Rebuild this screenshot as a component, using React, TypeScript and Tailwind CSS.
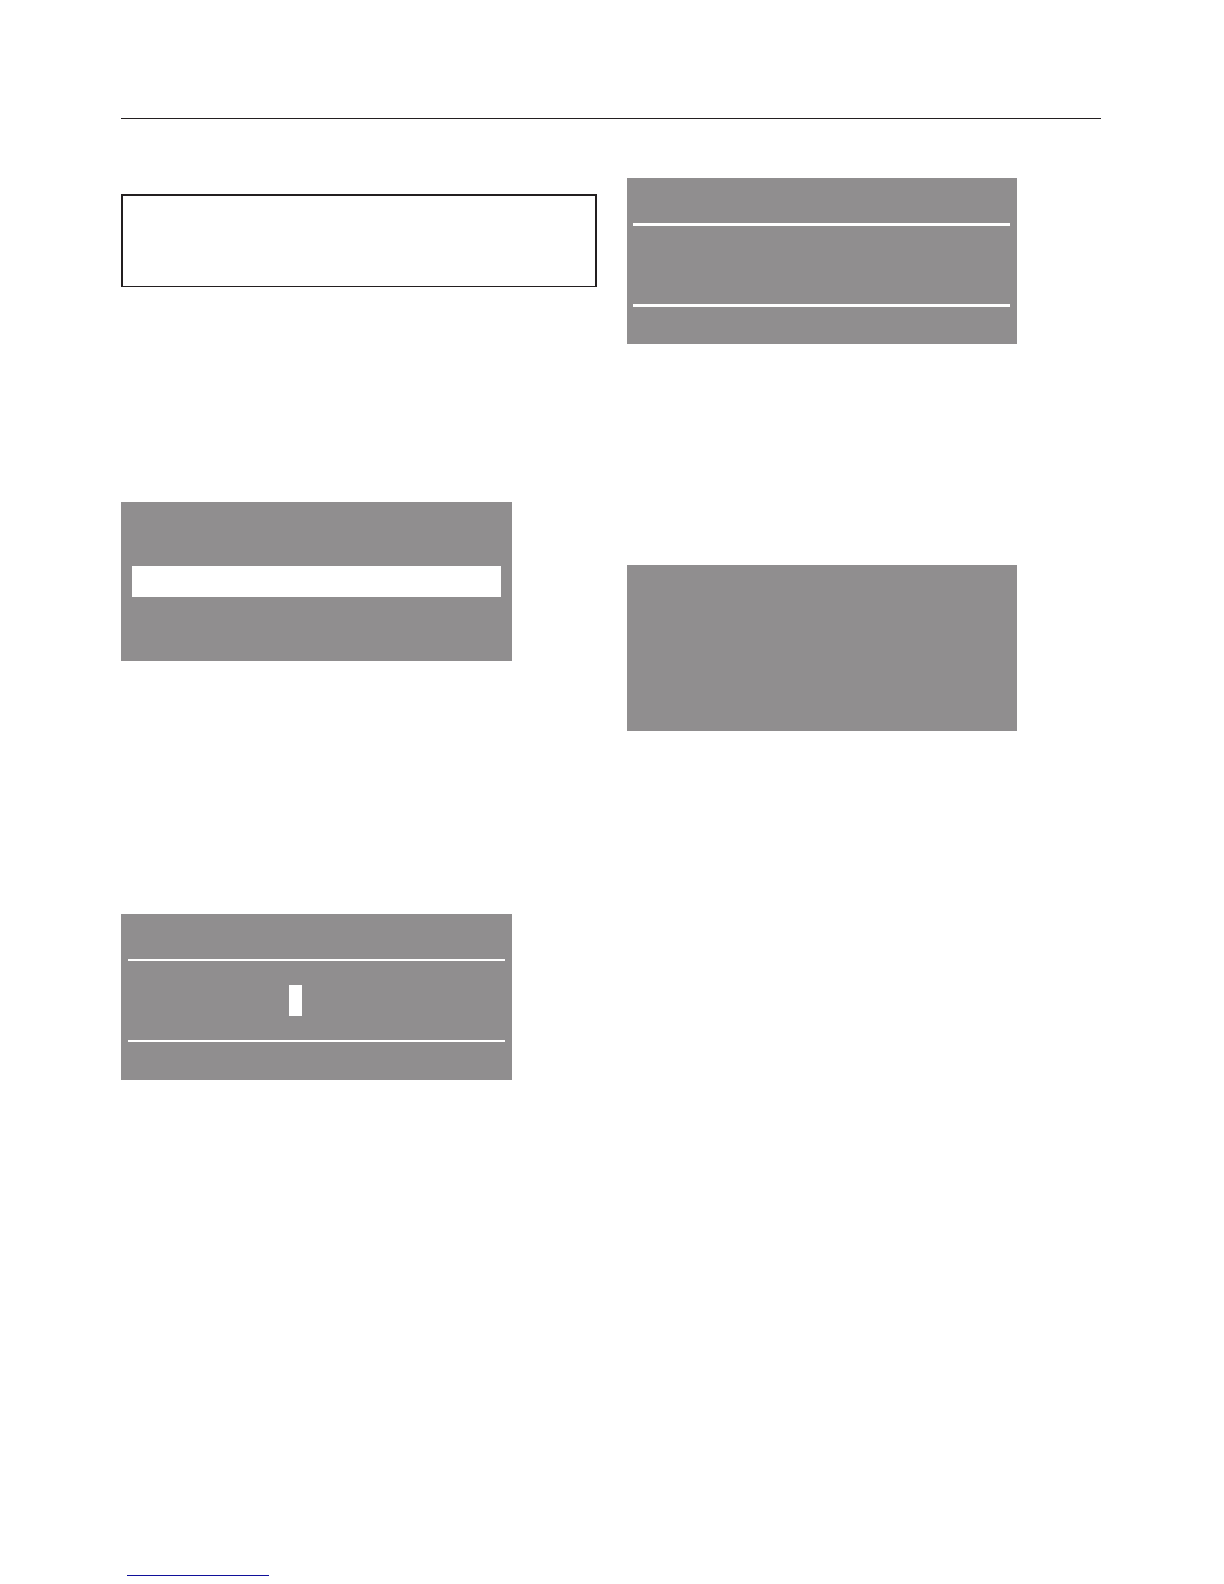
import React from 'react';
import clsx from 'clsx';

interface ScreenProps {
  className?: string;
  children?: React.ReactNode;
}

// Grey display panel
const Screen: React.FC<ScreenProps> = ({ className, children }) => (
  <section className={clsx('w-full bg-[#908e8f]', className)}>{children}</section>
);

const MenuScreen: React.FC = () => (
  <Screen className="max-w-[391px] px-[11px] py-16">
    <div className="h-[31px] bg-white" />
  </Screen>
);

const EntryScreen: React.FC = () => (
  <Screen className="max-w-[391px] px-[7px] pt-[45px] pb-[38px]">
    <div className="border-y-2 border-white py-6 pl-[161px]">
      <div className="h-[31px] w-[13px] bg-white" />
    </div>
  </Screen>
);

const MessageScreen: React.FC = () => (
  <Screen className="max-w-[390px] pt-[45px] pr-[7px] pb-[37px] pl-[6px]">
    <div className="h-[84px] border-y-[3px] border-white" />
  </Screen>
);

export default function App() {
  return (
    <div className="flex min-h-screen flex-col bg-white pt-[118px] pr-[123px] pb-2 pl-[121px] font-['Liberation_Sans',sans-serif]">
      <header className="border-t border-[#231f20]" />

      <main className="grid grid-cols-[476fr_474fr] gap-[30px]">
        <div className="pt-[75px]">
          <div className="mb-[215px] h-[93px] border-2 border-b border-[#231f20]" />
          <div className="mb-[253px]">
            <MenuScreen />
          </div>
          <EntryScreen />
        </div>

        <div className="pt-[59px]">
          <div className="mb-[221px]">
            <MessageScreen />
          </div>
          <Screen className="h-[166px] max-w-[390px]" />
        </div>
      </main>

      <footer className="mt-auto pl-[6px]">
        <div className="h-px w-[142px] bg-[#10109a]" />
      </footer>
    </div>
  );
}
